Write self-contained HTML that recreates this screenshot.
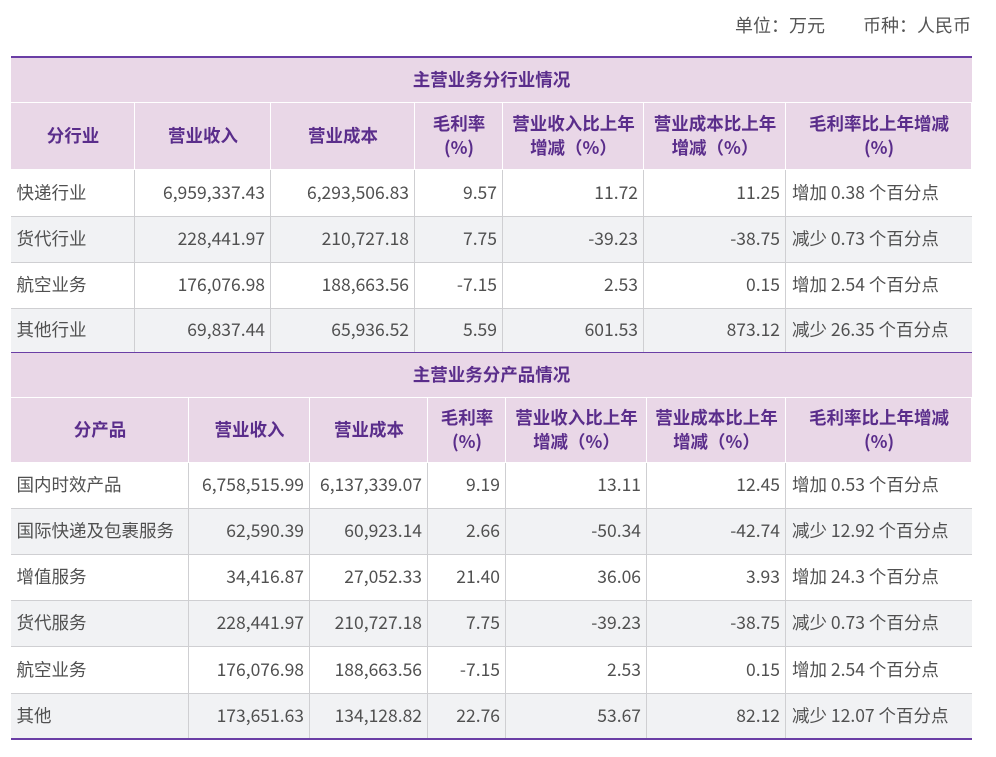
<!DOCTYPE html>
<html><head><meta charset="utf-8"><style>
body{margin:0;background:#fff;width:996px;height:757px;overflow:hidden;font-family:"Noto Sans CJK SC","Liberation Sans",sans-serif;}
.u{position:absolute;top:12px;font-size:18px;color:#555;white-space:pre;}
table{position:absolute;left:10px;border-collapse:collapse;table-layout:fixed;width:961px;font-size:17.5px;color:#505050;}
td{padding:0 5px 0 6px;white-space:nowrap;overflow:hidden;border:1.5px solid #cfcfd2;line-height:22px;}
tr.t td{background:#e9d7e7;color:#5a2d8b;font-weight:bold;text-align:center;border:none;font-size:17.5px;}
tr.h td{background:#e9d7e7;color:#5a2d8b;font-weight:bold;text-align:center;border:1.5px solid #fff;font-size:17.5px;line-height:24px;}
tr.g td{background:#f1f2f4;}
td.n{text-align:right;}
td:first-child{border-left:none;}
td:last-child{border-right:none;}
#t1{top:56px;border-top:2px solid #6a3ea5;border-bottom:2px solid #6a3ea5;}
#t2{top:353px;border-bottom:2px solid #6a3ea5;}
</style></head><body>
<div class="u" style="left:735px">单位：万元</div>
<div class="u" style="left:863px">币种：人民币</div>
<table id="t1">
<colgroup><col style="width:124px"><col style="width:136px"><col style="width:144px"><col style="width:88px"><col style="width:141px"><col style="width:142px"><col style="width:186px"></colgroup>
<tr class="t" style="height:45px"><td colspan="7">主营业务分行业情况</td></tr>
<tr class="h" style="height:67px"><td>分行业</td><td>营业收入</td><td>营业成本</td><td>毛利率<br>(%)</td><td>营业收入比上年<br>增减（%）</td><td>营业成本比上年<br>增减（%）</td><td>毛利率比上年增减<br>(%)</td></tr>
<tr style="height:47px"><td>快递行业</td><td class="n">6,959,337.43</td><td class="n">6,293,506.83</td><td class="n">9.57</td><td class="n">11.72</td><td class="n">11.25</td><td>增加 0.38 个百分点</td></tr>
<tr class="g" style="height:46px"><td>货代行业</td><td class="n">228,441.97</td><td class="n">210,727.18</td><td class="n">7.75</td><td class="n">-39.23</td><td class="n">-38.75</td><td>减少 0.73 个百分点</td></tr>
<tr style="height:46px"><td>航空业务</td><td class="n">176,076.98</td><td class="n">188,663.56</td><td class="n">-7.15</td><td class="n">2.53</td><td class="n">0.15</td><td>增加 2.54 个百分点</td></tr>
<tr class="g" style="height:45px"><td>其他行业</td><td class="n">69,837.44</td><td class="n">65,936.52</td><td class="n">5.59</td><td class="n">601.53</td><td class="n">873.12</td><td>减少 26.35 个百分点</td></tr>
</table>
<table id="t2">
<colgroup><col style="width:178px"><col style="width:121px"><col style="width:118px"><col style="width:78px"><col style="width:141px"><col style="width:139px"><col style="width:186px"></colgroup>
<tr class="t" style="height:44px"><td colspan="7">主营业务分产品情况</td></tr>
<tr class="h" style="height:65px"><td>分产品</td><td>营业收入</td><td>营业成本</td><td>毛利率<br>(%)</td><td>营业收入比上年<br>增减（%）</td><td>营业成本比上年<br>增减（%）</td><td>毛利率比上年增减<br>(%)</td></tr>
<tr style="height:46px"><td>国内时效产品</td><td class="n">6,758,515.99</td><td class="n">6,137,339.07</td><td class="n">9.19</td><td class="n">13.11</td><td class="n">12.45</td><td>增加 0.53 个百分点</td></tr>
<tr class="g" style="height:46px"><td>国际快递及包裹服务</td><td class="n">62,590.39</td><td class="n">60,923.14</td><td class="n">2.66</td><td class="n">-50.34</td><td class="n">-42.74</td><td>减少 12.92 个百分点</td></tr>
<tr style="height:46px"><td>增值服务</td><td class="n">34,416.87</td><td class="n">27,052.33</td><td class="n">21.40</td><td class="n">36.06</td><td class="n">3.93</td><td>增加 24.3 个百分点</td></tr>
<tr class="g" style="height:46px"><td>货代服务</td><td class="n">228,441.97</td><td class="n">210,727.18</td><td class="n">7.75</td><td class="n">-39.23</td><td class="n">-38.75</td><td>减少 0.73 个百分点</td></tr>
<tr style="height:47px"><td>航空业务</td><td class="n">176,076.98</td><td class="n">188,663.56</td><td class="n">-7.15</td><td class="n">2.53</td><td class="n">0.15</td><td>增加 2.54 个百分点</td></tr>
<tr class="g" style="height:46px"><td>其他</td><td class="n">173,651.63</td><td class="n">134,128.82</td><td class="n">22.76</td><td class="n">53.67</td><td class="n">82.12</td><td>减少 12.07 个百分点</td></tr>
</table>
</body></html>
